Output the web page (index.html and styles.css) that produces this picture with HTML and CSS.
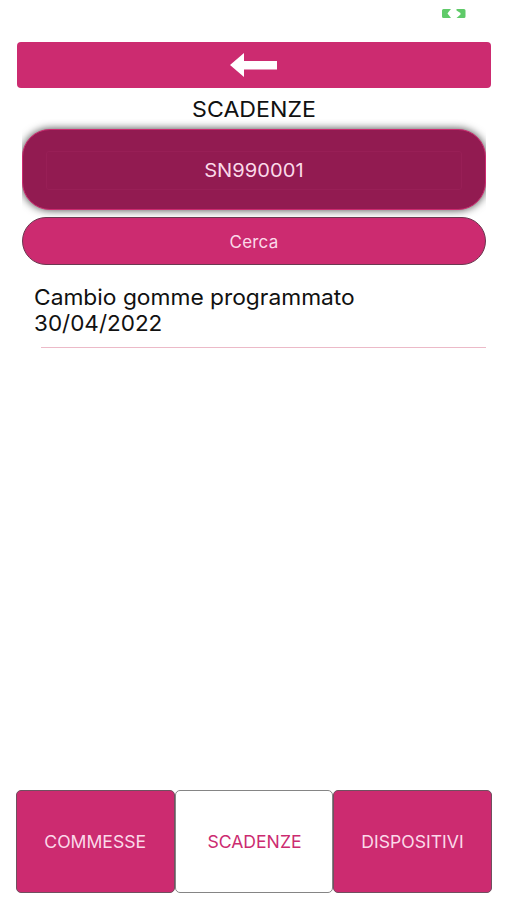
FILE: index.html
```html
<!DOCTYPE html>
<html lang="it">
<head>
<meta charset="UTF-8">
<meta name="viewport" content="width=device-width, initial-scale=1.0">
<title>Scadenze</title>
<link rel="stylesheet" href="styles.css">
</head>
<body>
  <div class="status-bar">
    <svg class="battery" width="24" height="9" viewBox="0 0 24 9">
      <path fill="#5fca69" d="M1.5 0H9L6.5 3L5.5 4.5L9 9H1.5Q0 9 0 7.5V1.5Q0 0 1.5 0Z"/>
      <path fill="#5fca69" d="M14.5 0H22Q23.5 0 23.5 1.5V7.5Q23.5 9 22 9H14.5L18.5 5.5V4L14.5 1.5Z"/>
    </svg>
  </div>
  <button type="button" class="back" aria-label="Indietro">
    <svg width="47" height="24" viewBox="0 0 47 24">
      <path fill="#ffffff" d="M0 12L14 0V8H47V16.5H14V24Z"/>
    </svg>
  </button>
  <main>
    <h1>SCADENZE</h1>
    <div class="device">
      <div class="device-card">
        <div class="device-field"><span>SN990001</span></div>
      </div>
    </div>
    <button type="button" class="search">Cerca</button>
    <ul class="list">
      <li>
        <div class="item-title">Cambio gomme programmato</div>
        <div class="item-date">30/04/2022</div>
      </li>
    </ul>
  </main>
  <nav class="tabs">
    <button type="button" class="tab"><span>COMMESSE</span></button>
    <button type="button" class="tab active"><span>SCADENZE</span></button>
    <button type="button" class="tab"><span>DISPOSITIVI</span></button>
  </nav>
</body>
</html>
```

FILE: styles.css
```css
* {
  box-sizing: border-box;
}

body {
  background-color: #ffffff;
  color: #111111;
  font-family: Inter, "Liberation Sans", sans-serif;
  display: flex;
  flex-direction: column;
  height: 900px;
  margin: 0;
  overflow: hidden;
}

button {
  font-family: inherit;
  padding: 0;
}

svg {
  display: block;
}

.status-bar {
  display: flex;
  justify-content: flex-end;
  height: 42px;
  padding: 8.5px 41.5px 0 0;
}

.back {
  display: flex;
  justify-content: center;
  align-items: center;
  height: 46px;
  margin: 0 16px 0 17px;
  padding-right: 1px;
  background-color: #cc2b70;
  border: none;
  border-radius: 4px;
}

main {
  flex: 1;
  padding: 0 21px 0 22px;
}

h1 {
  height: 41px;
  margin: 0;
  font-size: 22px;
  font-weight: 400;
  line-height: 42px;
  text-align: center;
  transform: scaleX(1.052);
}

/* shadow is cut off at the sides only */
.device {
  overflow-x: clip;
  overflow-y: visible;
}

.device-card {
  height: 81px;
  padding: 21px 23px 19px;
  background-color: #921b51;
  border: 1px solid #cc2b70;
  border-radius: 28px;
  box-shadow: 0 0 9px rgba(0, 0, 0, 0.75);
}

.device-field {
  height: 39px;
  border: 1px solid #981f56;
  border-radius: 3px;
  color: #fbd9e9;
  font-size: 19px;
  line-height: 37px;
  text-align: center;
}

.device-field span {
  display: inline-block;
  transform: scaleX(1.06);
}

.search {
  display: block;
  width: 100%;
  height: 48px;
  margin-top: 7px;
  padding-top: 1px;
  background-color: #cc2b70;
  border: 1px solid #6b3850;
  border-radius: 24px;
  color: #fbd9e9;
  font-size: 17px;
  letter-spacing: 0.2px;
}

.list {
  list-style: none;
  margin: 19px 0 0;
  padding: 0;
}

.list li {
  padding-left: 12px;
  font-size: 22px;
  line-height: 26px;
}

.item-title,
.item-date {
  transform: scaleX(1.035);
  transform-origin: left;
}

.item-date {
  transform: scaleX(1.022);
}

.list li::after {
  content: "";
  display: block;
  height: 1px;
  margin: 11px 0 0 7px;
  background-color: #ecbac8;
}

.tabs {
  display: flex;
  height: 110px;
  padding: 0 15px 7px 16px;
}

.tab {
  flex: 1;
  background-color: #cc2b70;
  border: 1px solid #70505f;
  border-radius: 5px;
  color: #fbd9e9;
  font-size: 17px;
}

.tab span {
  display: inline-block;
  transform: scaleX(1.035);
}

.tab.active {
  background-color: #ffffff;
  border-color: #858585;
  color: #cc2b70;
}
```
